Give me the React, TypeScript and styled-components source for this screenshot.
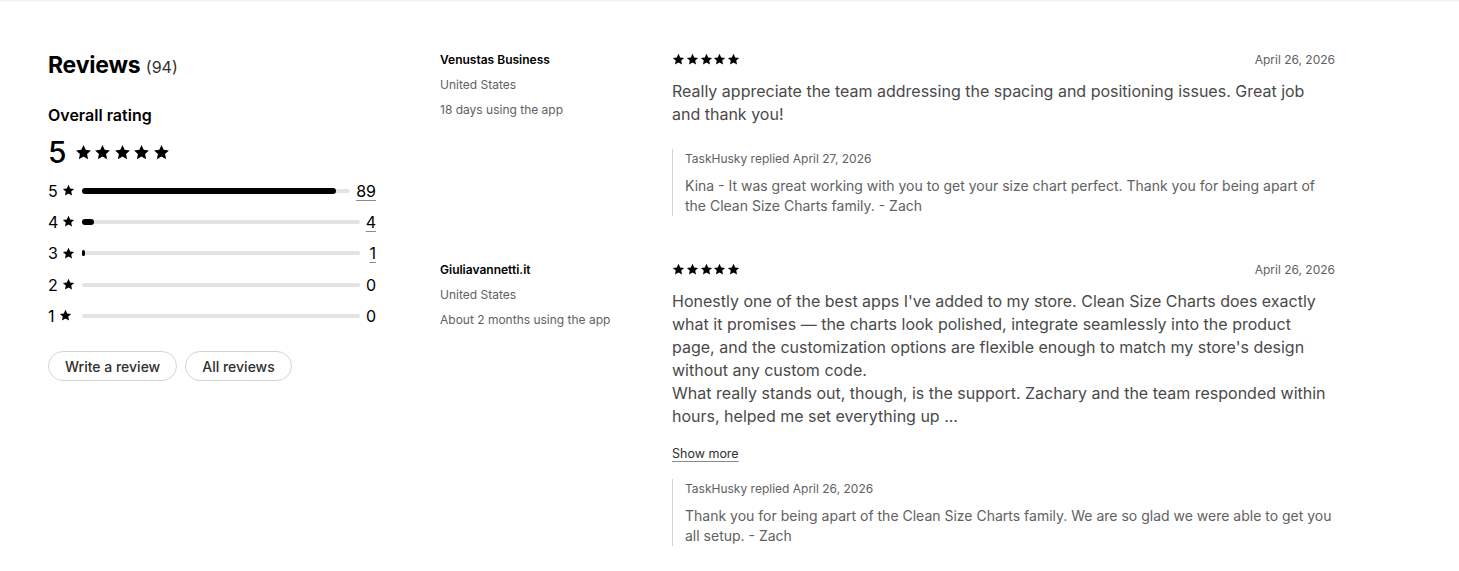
import styled, { createGlobalStyle } from 'styled-components';

const GlobalStyle = createGlobalStyle`
  * { box-sizing: border-box; }
  body {
    margin: 0;
    background: #fff;
    font-family: Inter, "Noto Sans", sans-serif;
    color: #303030;
    -webkit-font-smoothing: antialiased;
  }
`;

const Page = styled.div`
  position: relative;
  min-height: 571px;
  padding: 42px 0 0 48px;
  display: grid;
  grid-template-columns: 328px 1fr;
  column-gap: 64px;
  border-top: 1px solid #f1f1f1;
  box-shadow: inset 0 2px 3px -2px rgba(0, 0, 0, 0.06);
`;

const Summary = styled.section`
  display: flex;
  flex-direction: column;
  padding-top: 6px;
`;

const Heading = styled.h2`
  margin: 0;
  font-size: 23px;
  line-height: 32px;
  font-weight: 700;
  color: #000;
  letter-spacing: -0.2px;
`;

const Count = styled.span`
  font-size: 16px;
  font-weight: 400;
  color: #303030;
  letter-spacing: 0;
`;

const SubHeading = styled.h3`
  margin: 20px 0 0;
  font-size: 16px;
  line-height: 24px;
  font-weight: 600;
  color: #000;
`;

const Overall = styled.div`
  display: flex;
  align-items: center;
  gap: 8px;
  margin-top: 7px;
`;

const BigScore = styled.span`
  font-size: 30px;
  line-height: 36px;
  font-weight: 500;
  color: #000;
`;

const Stars = styled.span<{ $size: number; $gap: number }>`
  display: inline-flex;
  gap: ${p => p.$gap}px;
  svg { width: ${p => p.$size}px; height: ${p => p.$size}px; display: block; }
`;

const Bars = styled.div`
  display: flex;
  flex-direction: column;
  margin-top: 5px;
`;

const BarRow = styled.div`
  display: flex;
  align-items: center;
  height: 31.3px;
  font-size: 16px;
  color: #000;
`;

const BarLabel = styled.span`
  display: inline-flex;
  align-items: center;
  gap: 4px;
  width: 34px;
  svg { width: 13px; height: 13px; }
`;

const Track = styled.div`
  flex: 1;
  height: 4px;
  border-radius: 2px;
  background: #e3e3e3;
  display: flex;
  align-items: center;
`;

const Fill = styled.div`
  height: 6px;
  min-width: 2px;
  border-radius: 3px;
  background: #000;
`;

const BarCount = styled.a<{ $link: boolean }>`
  margin-left: 6px;
  min-width: 10px;
  text-align: right;
  color: #000;
  text-decoration: ${p => (p.$link ? 'underline' : 'none')};
  text-decoration-color: #8a8a8a;
  text-underline-offset: 3px;
`;

const Actions = styled.div`
  display: flex;
  gap: 8px;
  margin-top: 20px;
`;

const PillButton = styled.button`
  height: 30px;
  padding: 0 16px;
  border: 1px solid #d4d4d4;
  border-radius: 15px;
  background: #fff;
  font-family: inherit;
  font-size: 14px;
  font-weight: 500;
  color: #303030;
  cursor: pointer;
`;

const ReviewList = styled.div`
  display: flex;
  flex-direction: column;
  gap: 46px;
  padding-top: 9px;
  width: 895px;
`;

const Review = styled.article`
  display: grid;
  grid-template-columns: 232px 1fr;
`;

const Author = styled.div`
  display: flex;
  flex-direction: column;
  gap: 9px;
  font-size: 12px;
  line-height: 16px;
`;

const AuthorName = styled.span`
  font-weight: 600;
  color: #000;
`;

const AuthorMeta = styled.span`
  color: #616161;
`;

const Body = styled.div`
  display: flex;
  flex-direction: column;
  margin-top: -1px;
`;

const TopLine = styled.div`
  display: flex;
  justify-content: space-between;
  align-items: center;
  height: 16px;
  font-size: 12px;
  color: #616161;
`;

const Text = styled.p`
  margin: 13px 0 0;
  font-size: 16px;
  line-height: 23px;
  color: #4a4a4a;
`;

const ShowMore = styled.a`
  margin-top: 18px;
  align-self: flex-start;
  font-size: 12.5px;
  line-height: 16px;
  color: #303030;
  text-decoration: underline;
  text-decoration-color: #8a8a8a;
  text-underline-offset: 3px;
`;

const Reply = styled.div<{ $gap: number }>`
  margin-top: ${p => p.$gap}px;
  padding: 2px 0 0 12px;
  border-left: 1px solid #d4d4d4;
`;

const ReplyHead = styled.div`
  font-size: 12px;
  line-height: 16px;
  color: #616161;
`;

const ReplyText = styled.p`
  margin: 9px 0 0;
  font-size: 14px;
  line-height: 20px;
  color: #616161;
`;

const Star = () => (
  <svg viewBox="0 0 20 20" aria-hidden="true">
    <path
      fill="#000"
      d="M10 1.2l2.6 5.6 6.1.7-4.5 4.2 1.2 6.1L10 14.8l-5.4 3 1.2-6.1L1.3 7.5l6.1-.7z"
    />
  </svg>
);

const FiveStars = ({ size, gap }: { size: number; gap: number }) => (
  <Stars $size={size} $gap={gap}>
    {[0, 1, 2, 3, 4].map(i => (
      <Star key={i} />
    ))}
  </Stars>
);

const breakdown = [
  { stars: 5, count: 89 },
  { stars: 4, count: 4 },
  { stars: 3, count: 1 },
  { stars: 2, count: 0 },
  { stars: 1, count: 0 },
];

const total = 94;

type ReviewData = {
  name: string;
  country: string;
  usage: string;
  date: string;
  text: string[];
  more?: boolean;
  reply: { date: string; text: string };
};

const reviews: ReviewData[] = [
  {
    name: 'Venustas Business',
    country: 'United States',
    usage: '18 days using the app',
    date: 'April 26, 2026',
    text: [
      'Really appreciate the team addressing the spacing and positioning issues. Great job and thank you!',
    ],
    reply: {
      date: 'April 27, 2026',
      text: 'Kina - It was great working with you to get your size chart perfect. Thank you for being apart of the Clean Size Charts family. - Zach',
    },
  },
  {
    name: 'Giuliavannetti.it',
    country: 'United States',
    usage: 'About 2 months using the app',
    date: 'April 26, 2026',
    text: [
      "Honestly one of the best apps I've added to my store. Clean Size Charts does exactly what it promises — the charts look polished, integrate seamlessly into the product page, and the customization options are flexible enough to match my store's design without any custom code.",
      'What really stands out, though, is the support. Zachary and the team responded within hours, helped me set everything up ...',
    ],
    more: true,
    reply: {
      date: 'April 26, 2026',
      text: 'Thank you for being apart of the Clean Size Charts family. We are so glad we were able to get you all setup. - Zach',
    },
  },
];

export default function App() {
  return (
    <>
      <GlobalStyle />
      <Page>
        <Summary>
          <Heading>
            Reviews <Count>(94)</Count>
          </Heading>
          <SubHeading>Overall rating</SubHeading>
          <Overall>
            <BigScore>5</BigScore>
            <FiveStars size={17} gap={2.5} />
          </Overall>
          <Bars>
            {breakdown.map(row => (
              <BarRow key={row.stars}>
                <BarLabel>
                  {row.stars}
                  <Star />
                </BarLabel>
                <Track>
                  {row.count > 0 && (
                    <Fill style={{ width: `${(row.count / total) * 100}%` }} />
                  )}
                </Track>
                <BarCount $link={row.count > 0}>{row.count}</BarCount>
              </BarRow>
            ))}
          </Bars>
          <Actions>
            <PillButton>Write a review</PillButton>
            <PillButton>All reviews</PillButton>
          </Actions>
        </Summary>

        <ReviewList>
          {reviews.map(r => (
            <Review key={r.name}>
              <Author>
                <AuthorName>{r.name}</AuthorName>
                <AuthorMeta>{r.country}</AuthorMeta>
                <AuthorMeta>{r.usage}</AuthorMeta>
              </Author>
              <Body>
                <TopLine>
                  <FiveStars size={13} gap={0.8} />
                  <span>{r.date}</span>
                </TopLine>
                <Text>
                  {r.text.map((t, i) => (
                    <span key={i}>
                      {i > 0 && <br />}
                      {t}
                    </span>
                  ))}
                </Text>
                {r.more && <ShowMore>Show more</ShowMore>}
                <Reply $gap={r.more ? 17 : 23}>
                  <ReplyHead>TaskHusky replied {r.reply.date}</ReplyHead>
                  <ReplyText>{r.reply.text}</ReplyText>
                </Reply>
              </Body>
            </Review>
          ))}
        </ReviewList>
      </Page>
    </>
  );
}
